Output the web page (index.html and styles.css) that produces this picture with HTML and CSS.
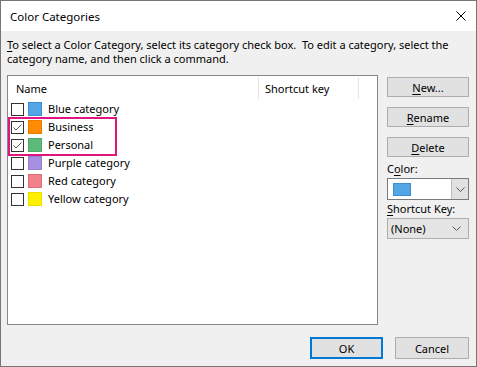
FILE: index.html
```html
<!DOCTYPE html>
<html lang="en">
<head>
    <meta charset="UTF-8">
    <title>Color Categories</title>
    <link rel="stylesheet" href="styles.css">
</head>
<body>
    <div class="window">
        <div class="titlebar">
            <span class="title">Color Categories</span>
            <svg class="close" width="10" height="10" viewBox="0 0 10 10">
                <path d="M0.5 0.5 L9.5 9.5 M9.5 0.5 L0.5 9.5" stroke="#000" stroke-width="1" fill="none"/>
            </svg>
        </div>

        <div class="content">
            <p class="desc"><u>T</u>o select a Color Category, select its category check box.&nbsp; To edit a category, select the<br>category name, and then click a command.</p>

            <div class="main">
                <div class="listbox">
                    <div class="list-head">
                        <div class="col-name">Name</div>
                        <div class="col-key">Shortcut key</div>
                        <div class="col-rest"></div>
                    </div>
                    <div class="rows">
                        <div class="row">
                            <span class="check"></span>
                            <span class="swatch blue"></span>
                            <span class="label">Blue category</span>
                        </div>
                        <div class="picked">
                            <div class="row">
                                <span class="check"><svg width="11" height="11" viewBox="0 0 11 11"><polyline points="1.5,5.5 4,8 9.5,2.5" fill="none" stroke="#555" stroke-width="1"/></svg></span>
                                <span class="swatch orange"></span>
                                <span class="label">Business</span>
                            </div>
                            <div class="row">
                                <span class="check"><svg width="11" height="11" viewBox="0 0 11 11"><polyline points="1.5,5.5 4,8 9.5,2.5" fill="none" stroke="#555" stroke-width="1"/></svg></span>
                                <span class="swatch green"></span>
                                <span class="label">Personal</span>
                            </div>
                        </div>
                        <div class="row">
                            <span class="check"></span>
                            <span class="swatch purple"></span>
                            <span class="label">Purple category</span>
                        </div>
                        <div class="row">
                            <span class="check"></span>
                            <span class="swatch red"></span>
                            <span class="label">Red category</span>
                        </div>
                        <div class="row">
                            <span class="check"></span>
                            <span class="swatch yellow"></span>
                            <span class="label">Yellow category</span>
                        </div>
                    </div>
                </div>

                <div class="side">
                    <button class="btn"><u>N</u>ew...</button>
                    <button class="btn"><u>R</u>ename</button>
                    <button class="btn"><u>D</u>elete</button>

                    <label class="field-label">C<u>o</u>lor:</label>
                    <div class="combo color-combo">
                        <span class="combo-value"><span class="swatch-big"></span></span>
                        <span class="drop">
                            <svg width="9" height="5" viewBox="0 0 9 5"><polyline points="0.5,0.5 4.5,4.5 8.5,0.5" fill="none" stroke="#555" stroke-width="1"/></svg>
                        </span>
                    </div>

                    <label class="field-label"><u>S</u>hortcut Key:</label>
                    <div class="combo key-combo">
                        <span class="combo-value">(None)</span>
                        <svg width="9" height="5" viewBox="0 0 9 5"><polyline points="0.5,0.5 4.5,4.5 8.5,0.5" fill="none" stroke="#555" stroke-width="1"/></svg>
                    </div>
                </div>
            </div>

            <div class="footer">
                <button class="btn ok">OK</button>
                <button class="btn cancel">Cancel</button>
            </div>
        </div>
    </div>
</body>
</html>
```

FILE: styles.css
```css
*, *::before, *::after { box-sizing: border-box; }
body { margin: 0; font-family: "Noto Sans", sans-serif; font-size: 11px; color: #000; }
u { text-decoration: underline; text-underline-offset: 2px; }

.window { width: 477px; height: 367px; border: 1px solid #767676; display: flex; flex-direction: column; background: #f0f0f0; }
.titlebar { height: 30px; background: #fff; display: flex; align-items: center; justify-content: space-between; padding: 0 10px 0 9px; }
.title { font-size: 11.5px; }

.content { flex: 1; padding: 7px 7px 0 6px; display: flex; flex-direction: column; }
.desc { margin: 0; line-height: 14px; white-space: nowrap; }

.main { display: flex; gap: 9px; margin-top: 9px; }
.listbox { width: 371px; height: 250px; border: 1px solid #828790; background: #fff; }
.list-head { display: flex; height: 24px; padding-top: 1px; }
.list-head > div { height: 22px; display: flex; align-items: center; }
.col-name { width: 251px; padding-left: 8px; border-right: 1px solid #e5e5e5; }
.col-key { width: 100px; padding-left: 6px; border-right: 1px solid #e5e5e5; }

.rows { padding-left: 3px; }
.row { height: 18px; display: flex; align-items: center; }
.label { line-height: 15px; margin-top: -2px; }
.picked { position: relative; }
.picked::after { content: ""; position: absolute; left: -3px; top: -1px; width: 109px; height: 39px; border: 2px solid #e0157f; }
.check { width: 13px; height: 13px; border: 1px solid #333; background: #fff; margin-right: 4px; display: flex; align-items: center; justify-content: center; }
.swatch { width: 14px; height: 14px; margin-right: 6px; border: 1px solid; }
.blue { background: #53a6e6; border-color: #3f8fd0; }
.orange { background: #ff8c00; border-color: #ec7d00; }
.green { background: #5dbb7a; border-color: #4aa868; }
.purple { background: #a78fe2; border-color: #9480d0; }
.red { background: #f1828b; border-color: #dc6f78; }
.yellow { background: #fff000; border-color: #ecdc00; }

.side { width: 82px; display: flex; flex-direction: column; padding-top: 2px; }
.btn { font: inherit; color: #000; background: #e1e1e1; border: 1px solid #adadad; height: 20px; padding: 0; margin-bottom: 10px; }
.field-label { display: block; height: 13px; line-height: 13px; margin: -5px 0 3px 0; }
.combo { display: flex; align-items: center; }
.color-combo { height: 22px; border: 1px solid #7a7a7a; background: #fff; margin-bottom: 7px; }
.color-combo .combo-value { flex: 1; padding-left: 5px; display: flex; }
.swatch-big { width: 18px; height: 13px; background: #53a6e6; border: 1px solid #3f8fd0; }
.drop { width: 17px; height: 20px; background: #e1e1e1; border-left: 1px solid #bdbdbd; display: flex; align-items: center; justify-content: center; }
.key-combo { height: 21px; border: 1px solid #adadad; background: #e5e5e5; justify-content: space-between; padding: 0 7px 0 3px; }

.footer { display: flex; justify-content: flex-end; gap: 12px; margin-top: 12px; }
.footer .btn { height: 22px; margin: 0; }
.ok { width: 73px; border: 2px solid #0078d7; }
.cancel { width: 74px; }
```
